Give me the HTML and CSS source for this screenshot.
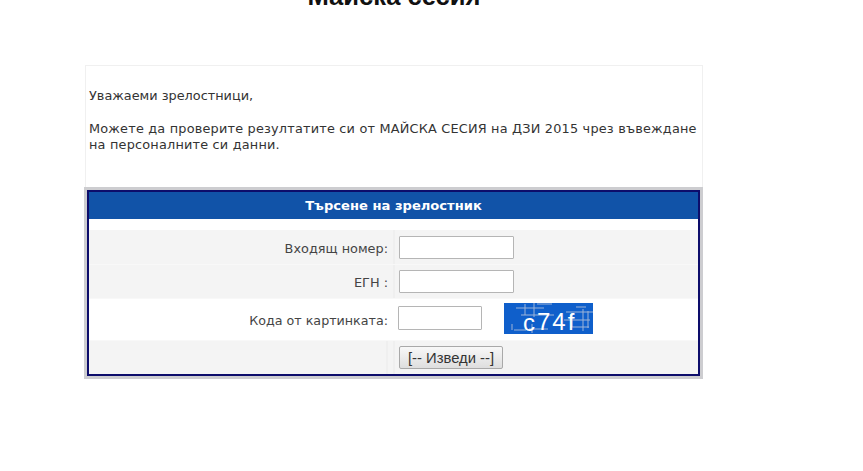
FILE: index.html
```
<!DOCTYPE html>
<html lang="bg">
<head>
<meta charset="utf-8">
<title>Майска сесия</title>
<link rel="stylesheet" href="styles.css">
</head>
<body>
<main class="page">
  <h1 class="title">Майска сесия</h1>
  <section class="notice">
    <p>Уважаеми зрелостници,</p>
    <p class="wide">Можете да проверите резултатите си от МАЙСКА СЕСИЯ на ДЗИ 2015 чрез въвеждане на персоналните си данни.</p>
  </section>
  <form class="frame">
    <div class="panel">
      <div class="head">Търсене на зрелостник</div>
      <div class="row grey r1">
        <label class="lab">Входящ номер:</label>
        <div class="val"><input class="inp" type="text"></div>
      </div>
      <div class="row grey r2">
        <label class="lab">ЕГН :</label>
        <div class="val"><input class="inp" type="text"></div>
      </div>
      <div class="row r3">
        <label class="lab">Кода от картинката:</label>
        <div class="val">
          <input class="inp small" type="text">
          <svg class="captcha" width="89" height="31" viewBox="0 0 89 31">
            <rect width="89" height="31" fill="#0f5fcb"/>
            <g stroke="#9db4d8" stroke-width="1" fill="none">
              <path d="M12 5H40M21 1V12M30 0V14M33 1H48M17 12H50M8 21V27M10 27H22M25 26H44M28 21V30"/>
              <path d="M62 9H89M68 10V24M79 6V28M84 8V25M60 17H86M66 24H85M72 4H82"/>
            </g>
            <text class="ctext" x="19" y="28">c<tspan dy="-1">74f</tspan></text>
          </svg>
        </div>
      </div>
      <div class="row grey r4">
        <div class="lab lab4"><span class="tick"></span></div>
        <div class="val"><button class="btn" type="button">[-- Изведи --]</button></div>
      </div>
    </div>
  </form>
</main>
</body>
</html>
```
FILE: styles.css
```
* { box-sizing: border-box; }
html, body { margin: 0; background: #fff; overflow: hidden; }
body { height: 471px; font-family: "DejaVu Sans", Verdana, sans-serif; font-size: 12.85px; color: #333; }
.page { width: 618px; margin-left: 85px; }
.title {
  margin: -16px 0 0;
  height: 81px;
  font: bold 25.6px/24px "Liberation Sans", Arial, sans-serif;
  color: #111;
  text-align: center;
}
.notice {
  height: 122px;
  padding: 22px 3px 0;
  border: 1px solid #f0f0f0;
  border-bottom: 0;
  line-height: 16px;
}
.notice p { margin: 0 0 17px; width: 610px; }
.notice .wide { letter-spacing: 0.2px; }
.frame { display: block; width: 619px; height: 192px; margin-left: -1px; padding: 3px; background: #cdcdd0; }
.panel { height: 186px; border: 2px solid #0d0d6b; background: #fff; }
.head {
  height: 27px;
  margin-bottom: 11px;
  background: #1153a8;
  color: #fff;
  font-weight: bold;
  font-size: 13.1px;
  line-height: 28px;
  text-align: center;
}
.row { display: flex; border-bottom: 1px solid #f8f8f8; }
.grey { background: #f4f4f4; }
.r1 { height: 35px; }
.r2 { height: 34px; }
.r3 { height: 42px; background: #fff; }
.r4 { height: 33px; border-bottom: 0; }
.lab {
  flex: 0 0 304px;
  padding: 11px 5px 0 0;
  text-align: right;
  color: #444;
  line-height: 15px;
}
.r2 .lab { padding-top: 10px; }
.r3 .lab { padding-top: 14px; font-size: 12.7px; }
.lab4 { display: flex; justify-content: flex-end; padding: 0 5px 0 0; }
.tick { width: 2px; background: #efefef; }
.val {
  flex: 1;
  display: flex;
  align-items: flex-start;
  padding: 6px 0 0 4px;
  border-left: 2px solid #efefef;
}
.r2 .val { padding-top: 5px; }
.r3 .val { border-left: 0; padding: 7px 0 0 5px; }
.r4 .val { padding-top: 5px; }
.inp {
  display: block;
  width: 115px;
  height: 23px;
  padding: 0 3px;
  border: 1px solid #b5b5b5;
  border-radius: 1px;
  background: #fff;
}
.small { width: 84px; height: 24px; }
.captcha { display: block; margin: -3px 0 0 22px; overflow: visible; }
.ctext { font: 24px "Liberation Sans", Arial, sans-serif; fill: #fff; letter-spacing: 2px; }
.btn {
  width: 104px;
  height: 23px;
  padding: 0;
  border: 1px solid #a9a9a9;
  border-radius: 2px;
  background: linear-gradient(#f8f8f8, #dedede);
  color: #333;
  font: 14.8px "Liberation Sans", Arial, sans-serif;
}
```
